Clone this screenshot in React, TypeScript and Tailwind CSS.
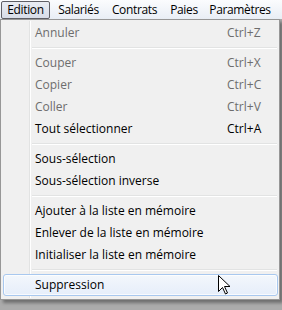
const font = { fontFamily: '"Open Sans", "Noto Sans", sans-serif' };

type Row =
  | { kind: "item"; label: string; key?: string; disabled?: boolean; hot?: boolean }
  | { kind: "sep" };

const rows: Row[] = [
  { kind: "item", label: "Annuler", key: "Ctrl+Z", disabled: true },
  { kind: "sep" },
  { kind: "item", label: "Couper", key: "Ctrl+X", disabled: true },
  { kind: "item", label: "Copier", key: "Ctrl+C", disabled: true },
  { kind: "item", label: "Coller", key: "Ctrl+V", disabled: true },
  { kind: "item", label: "Tout sélectionner", key: "Ctrl+A" },
  { kind: "sep" },
  { kind: "item", label: "Sous-sélection" },
  { kind: "item", label: "Sous-sélection inverse" },
  { kind: "sep" },
  { kind: "item", label: "Ajouter à la liste en mémoire" },
  { kind: "item", label: "Enlever de la liste en mémoire" },
  { kind: "item", label: "Initialiser la liste en mémoire" },
  { kind: "sep" },
  { kind: "item", label: "Suppression", hot: true },
];

const menus = [
  { label: "Salariés", w: "w-[53px]" },
  { label: "Contrats", w: "w-[59px]" },
  { label: "Paies", w: "w-[40px]" },
  { label: "Paramètres", w: "w-[72px]" },
];

function Cursor() {
  return (
    <svg
      width="13"
      height="20"
      viewBox="0 0 13 20"
      className="absolute left-[217px] top-[255px]"
    >
      <path
        d="M0.5 0.5 L0.5 16.5 L4.5 12.5 L7.5 19 L9.5 18 L6.5 11.5 L12 11.5 Z"
        fill="#fff"
        stroke="#000"
        strokeWidth="1"
      />
    </svg>
  );
}

export default function App() {
  return (
    <div
      className="w-[282px] h-[310px] bg-[#ababab] text-[12px] leading-none text-black overflow-hidden"
      style={font}
    >
      {/* menu bar */}
      <div className="h-[19px] flex items-center bg-gradient-to-b from-[#fbfcfe] to-[#e9eef5] pl-[1px] tracking-[-0.35px] whitespace-nowrap">
        <div className="w-[49px] h-[18px] mt-[1px] flex items-center justify-center border border-[#5f5f66] rounded-[2px] bg-gradient-to-b from-[#e9ecf3] to-[#d8dde8]">
          Edition
        </div>
        <div className="w-[2px]" />
        {menus.map((m) => (
          <div key={m.label} className={`${m.w} h-[18px] flex items-center justify-center`}>
            {m.label}
          </div>
        ))}
      </div>

      {/* dropdown */}
      <div className="relative w-[280px] h-[281px] border border-[#979797] bg-[#f0f0f0] shadow-[3px_3px_3px_rgba(0,0,0,0.35)] pt-[2px] pl-[2px] pr-[1px]">
        <div className="absolute left-[28px] top-[1px] bottom-[1px] w-[1px] bg-[#e2e3e3]" />
        <div className="absolute left-[29px] top-[1px] bottom-[1px] w-[1px] bg-white" />
        <div className="relative flex flex-col">
          {rows.map((r, i) =>
            r.kind === "sep" ? (
              <div key={i} className="h-[8px] flex flex-col justify-center pl-[29px] pr-[1px]">
                <div className="h-[1px] bg-[#e2e3e3]" />
                <div className="h-[1px] bg-white" />
              </div>
            ) : (
              <div
                key={i}
                className={
                  r.hot
                    ? "h-[22px] flex items-center border border-[#a8c8ef] rounded-[3px] bg-gradient-to-b from-[#f3f7fc] to-[#e6eefa] shadow-[inset_0_0_0_1px_rgba(255,255,255,0.7)]"
                    : "h-[22px] flex items-center border border-transparent"
                }
              >
                <span
                  className={`ml-[31px] w-[192px] ${r.disabled ? "text-[#6d6d6d]" : ""}`}
                >
                  {r.label}
                </span>
                {r.key && (
                  <span className={r.disabled ? "text-[#6d6d6d]" : ""}>{r.key}</span>
                )}
              </div>
            )
          )}
        </div>
        <Cursor />
      </div>
    </div>
  );
}
